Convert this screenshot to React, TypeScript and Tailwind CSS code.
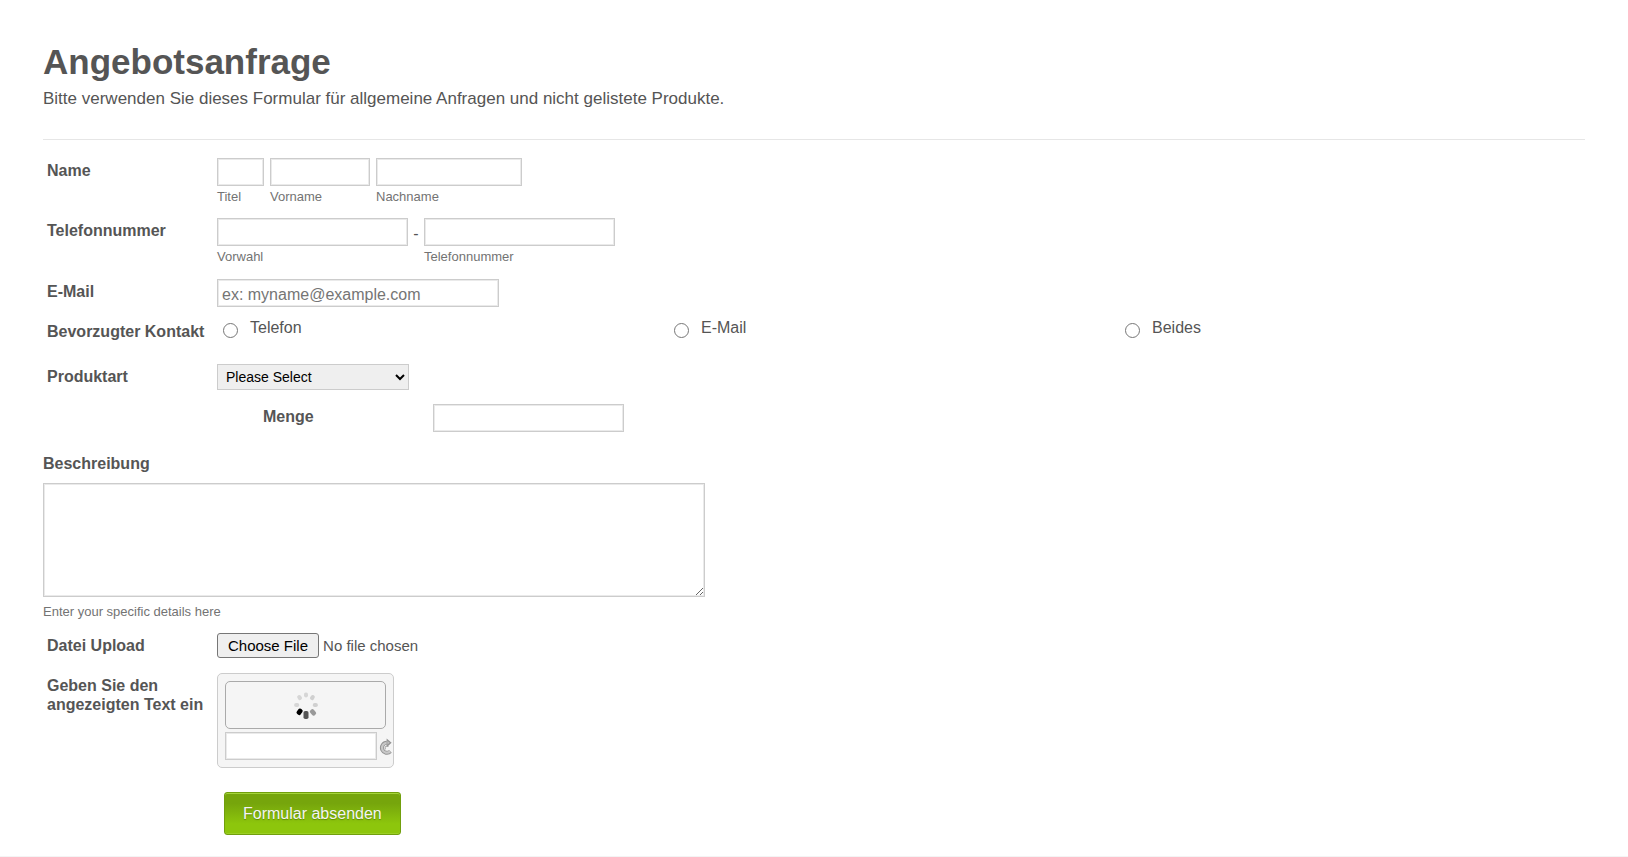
import { ReactNode, useState } from 'react';
import { cx } from 'class-variance-authority';

const inputStyle =
  'block h-7 border border-[#cccccc] bg-white px-1 pt-1 text-base text-[#555555] shadow-[inset_0_0_0_1px_#eaeaea] placeholder:text-[#757575]';

interface RowProps {
  label: string;
  htmlFor?: string;
  className?: string;
  children: ReactNode;
}

function Row({ label, htmlFor, className, children }: RowProps) {
  return (
    <div className={cx('flex items-start pl-1', className)}>
      <label
        htmlFor={htmlFor}
        className="w-[170px] shrink-0 pt-[3px] leading-[19px] font-bold"
      >
        {label}
      </label>
      {children}
    </div>
  );
}

interface FieldProps {
  id: string;
  label: string;
  className: string;
}

// Text box with its caption underneath
function Field({ id, label, className }: FieldProps) {
  return (
    <div>
      <input id={id} type="text" className={cx(inputStyle, className)} />
      <label
        htmlFor={id}
        className="mt-1 block text-[13px] leading-[14px] text-[#737373]"
      >
        {label}
      </label>
    </div>
  );
}

const spinnerDots = [
  { x: 0, y: -10, rx: 2, ry: 2.4, angle: 0, color: '#d6d6d6' },
  { x: 6.4, y: -7.4, rx: 2, ry: 2.6, angle: 35, color: '#d0d0d0' },
  { x: 9.3, y: 0, rx: 2.5, ry: 2, angle: 0, color: '#d0d0d0' },
  { x: 7, y: 7.4, rx: 2.3, ry: 3.3, angle: -40, color: '#999999' },
  { x: 0, y: 10, rx: 2.5, ry: 4, angle: 0, color: '#555555' },
  { x: -6.4, y: 6.8, rx: 2.4, ry: 3.2, angle: 35, color: '#000000' },
  { x: -9.3, y: 0, rx: 2.5, ry: 2, angle: 0, color: '#d6d6d6' },
  { x: -6.4, y: -7.4, rx: 2, ry: 2.6, angle: -35, color: '#d6d6d6' },
];

function Spinner() {
  return (
    <svg width="26" height="28" viewBox="-13 -14 26 28" aria-hidden="true">
      {spinnerDots.map((dot) => (
        <rect
          key={`${dot.x},${dot.y}`}
          x={-dot.rx}
          y={-dot.ry}
          width={dot.rx * 2}
          height={dot.ry * 2}
          rx="1.8"
          fill={dot.color}
          transform={`translate(${dot.x} ${dot.y}) rotate(${dot.angle})`}
        />
      ))}
    </svg>
  );
}

function ReloadIcon() {
  return (
    <svg width="14" height="17" viewBox="0 0 14 17" aria-hidden="true">
      <path
        d="M12.4 13.4A5 5 0 1 1 8.8 4.8"
        fill="none"
        stroke="#949494"
        strokeWidth="4"
      />
      <path
        d="M12.2 13.4A4.9 4.9 0 1 1 9 4.9"
        fill="none"
        stroke="#c8c8c8"
        strokeWidth="2.2"
      />
      <path d="M8.6 0.5L13.6 4.8L8.6 9.2Z" fill="#929292" />
      <path d="M9.3 2.8L11.8 4.8L9.3 6.8Z" fill="#bcbcbc" />
      <path
        d="M7.2 11.4V9.4Q7.2 8.2 8.6 8.2H10.6"
        fill="none"
        stroke="#9a9a9a"
        strokeWidth="1"
      />
    </svg>
  );
}

const contactOptions = ['Telefon', 'E-Mail', 'Beides'];

export default function App() {
  const [contact, setContact] = useState('');

  return (
    <main className="border-b border-[#f4f4f4] bg-white px-[43px] pt-10 pb-[21px] font-['Liberation_Sans',Arial,sans-serif] text-base text-[#555555]">
      <form onSubmit={(e) => e.preventDefault()}>
        <header className="border-b border-[#e6e6e6] pb-[29px]">
          <h1 className="text-[35px] leading-[44px] font-bold">
            Angebotsanfrage
          </h1>
          <p className="mt-1 text-[17px] leading-[22px]">
            Bitte verwenden Sie dieses Formular für allgemeine Anfragen und
            nicht gelistete Produkte.
          </p>
        </header>

        <Row label="Name" htmlFor="title" className="mt-[18px]">
          <div className="flex gap-[6px]">
            <Field id="title" label="Titel" className="w-[47px]" />
            <Field id="first" label="Vorname" className="w-[100px]" />
            <Field id="last" label="Nachname" className="w-[146px]" />
          </div>
        </Row>

        <Row label="Telefonnummer" htmlFor="area" className="mt-[14px]">
          <div className="flex">
            <Field id="area" label="Vorwahl" className="w-[191px]" />
            <span className="w-4 pt-1 text-center leading-6">-</span>
            <Field id="phone" label="Telefonnummer" className="w-[191px]" />
          </div>
        </Row>

        <Row label="E-Mail" htmlFor="email" className="mt-[15px]">
          <input
            id="email"
            type="email"
            placeholder="ex: myname@example.com"
            className={cx(inputStyle, 'w-[282px]')}
          />
        </Row>

        <Row label="Bevorzugter Kontakt" className="mt-3">
          <div className="mr-[15px] grid grow grid-cols-3">
            {contactOptions.map((option) => (
              <label key={option} className="flex items-start leading-[18px]">
                <input
                  type="radio"
                  name="contact"
                  value={option}
                  checked={contact === option}
                  onChange={() => setContact(option)}
                  className="mt-1 mr-3 ml-[6px] size-[15px]"
                />
                {option}
              </label>
            ))}
          </div>
        </Row>

        <Row label="Produktart" htmlFor="product" className="mt-[23px]">
          <select
            id="product"
            className="h-[26px] w-[192px] border border-[#cccccc] bg-[#efefef] px-1 text-sm text-black"
          >
            <option>Please Select</option>
            <option>Sonstiges</option>
          </select>
        </Row>

        <Row label="Menge" htmlFor="amount" className="mt-[14px] ml-[216px]">
          <input
            id="amount"
            type="text"
            className={cx(inputStyle, 'w-[191px]')}
          />
        </Row>

        <div className="mt-[22px]">
          <label htmlFor="details" className="block leading-[19px] font-bold">
            Beschreibung
          </label>
          <textarea
            id="details"
            className="mt-[10px] block h-[114px] w-[662px] max-w-full resize border border-[#cccccc] p-1 shadow-[inset_0_0_0_1px_#eaeaea]"
          />
          <p className="mt-2 text-[13px] leading-[14px] text-[#737373]">
            Enter your specific details here
          </p>
        </div>

        <Row label="Datei Upload" htmlFor="file" className="mt-[14px]">
          <input
            id="file"
            type="file"
            className="h-[25px] text-[15px] leading-[19px] file:mr-1 file:h-[25px] file:rounded-[3px] file:border file:border-solid file:border-[#767676] file:bg-[#efefef] file:px-[10px] file:text-black"
          />
        </Row>

        <Row
          label="Geben Sie den angezeigten Text ein"
          htmlFor="captcha"
          className="mt-[15px]"
        >
          <div className="w-[177px] rounded-[5px] border border-[#cccccc] bg-[#f5f5f5] py-[7px] pl-[7px]">
            <div className="flex h-12 w-[161px] items-center justify-center rounded-[5px] border border-[#aaaaaa]">
              <Spinner />
            </div>
            <div className="mt-[3px] flex items-center">
              <input
                id="captcha"
                type="text"
                className={cx(inputStyle, 'w-[152px]')}
              />
              <button type="button" aria-label="Neu laden" className="ml-px">
                <ReloadIcon />
              </button>
            </div>
          </div>
        </Row>

        <button
          type="submit"
          className="mt-6 ml-[181px] block h-[43px] rounded-[3px] border border-[#719f0d] bg-linear-to-b from-[#76a50c] from-25% to-[#8dc60c] to-75% px-[18px] text-base text-[#f4f4f4] shadow-[inset_0_1px_0_#a4d43a,inset_0_-1px_0_#9bcf25] text-shadow-[0_1px_1px_#5f8a00]"
        >
          Formular absenden
        </button>
      </form>
    </main>
  );
}
